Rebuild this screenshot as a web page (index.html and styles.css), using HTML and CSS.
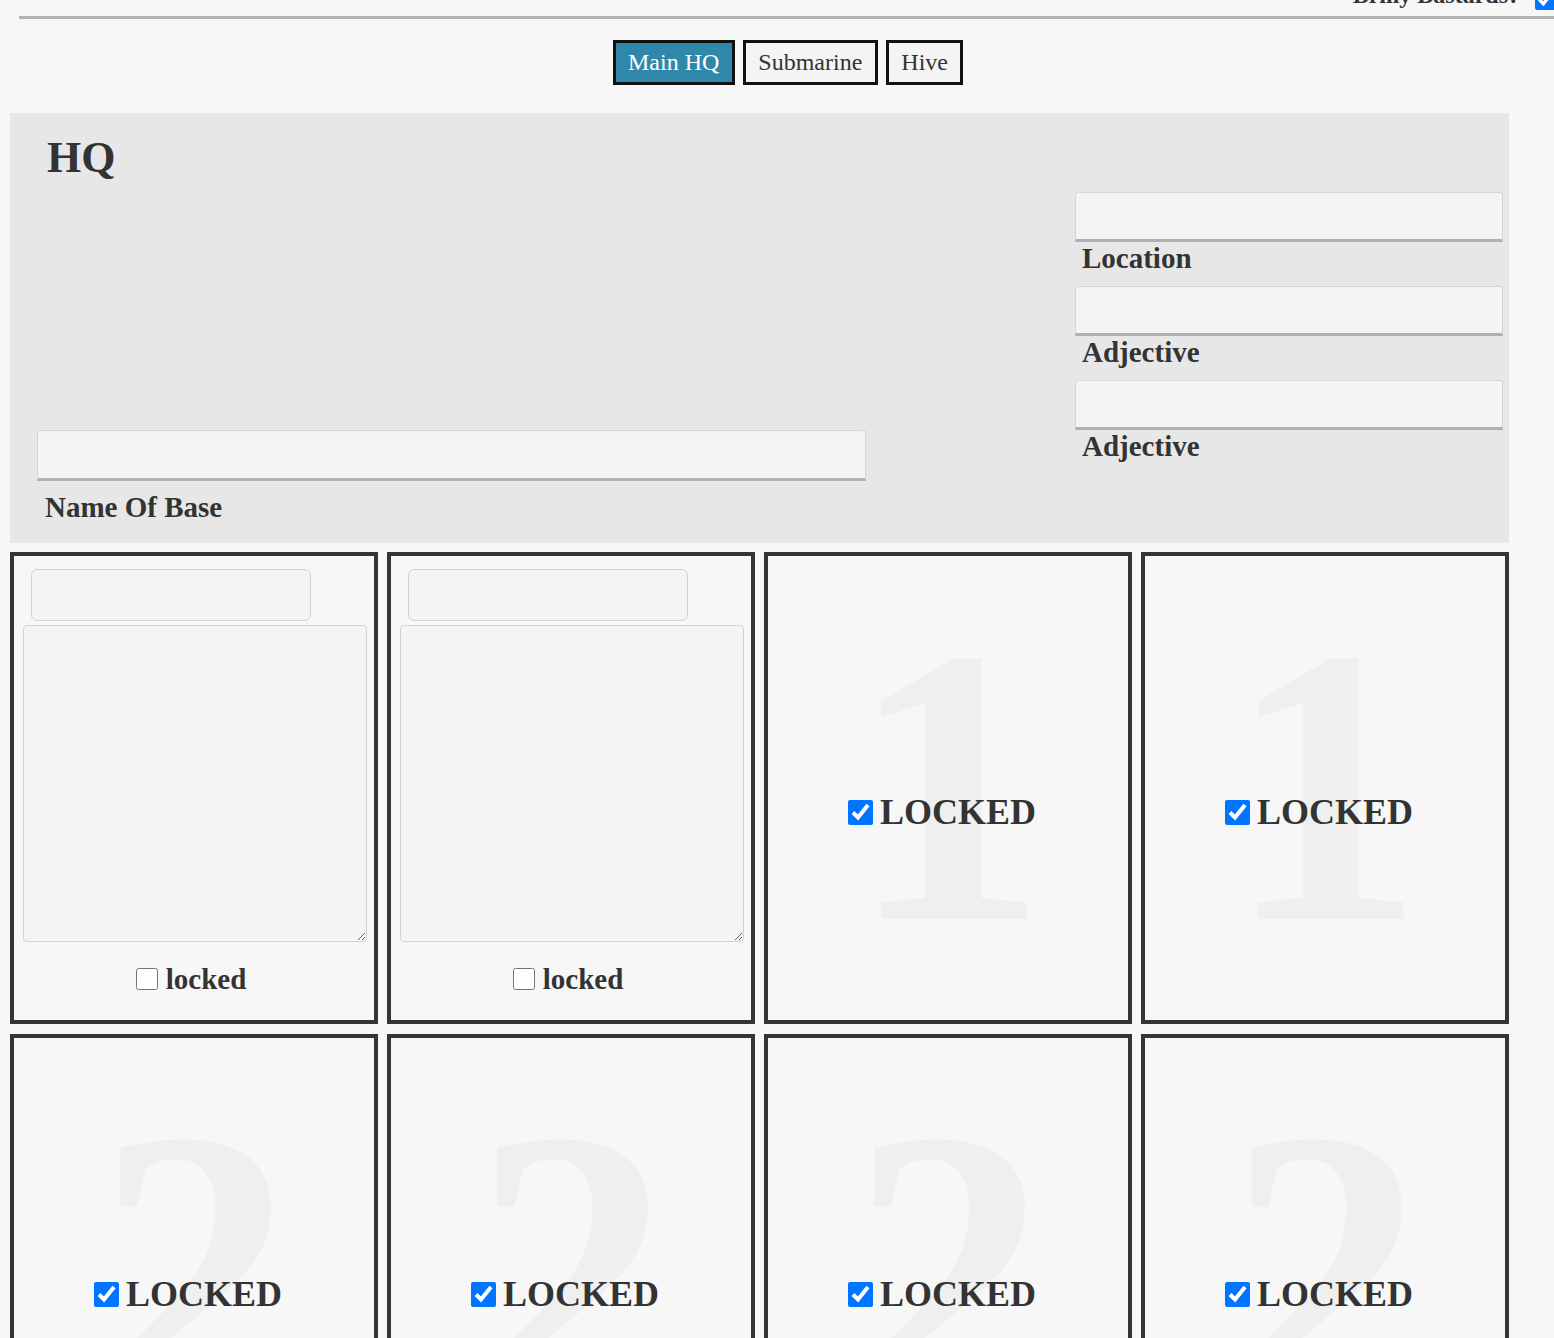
FILE: index.html
```html
<!DOCTYPE html>
<html lang="en">
<head>
<meta charset="utf-8">
<title>HQ</title>
<link rel="stylesheet" href="styles.css">
</head>
<body>
<div class="topbar">
  <div class="topbar-inner">
    <span class="top-label">Brilly Bastards?</span>
    <input type="checkbox" class="top-check" checked>
  </div>
</div>
<div class="rule"></div>

<nav class="tabs">
  <button class="tab active">Main HQ</button>
  <button class="tab">Submarine</button>
  <button class="tab">Hive</button>
</nav>

<section class="hq">
  <div class="hq-left">
    <h1 class="hq-title">HQ</h1>
    <div class="field name-field">
      <input type="text" class="line-input name-input">
      <label class="field-label name-label">Name Of Base</label>
    </div>
  </div>
  <div class="hq-right">
    <div class="field">
      <input type="text" class="line-input">
      <label class="field-label">Location</label>
    </div>
    <div class="field">
      <input type="text" class="line-input">
      <label class="field-label">Adjective</label>
    </div>
    <div class="field">
      <input type="text" class="line-input">
      <label class="field-label">Adjective</label>
    </div>
  </div>
</section>

<section class="grid">
  <div class="cell">
    <input type="text" class="cell-input">
    <textarea class="cell-text"></textarea>
    <label class="lock small"><input type="checkbox" class="chk-small"><span>locked</span></label>
  </div>
  <div class="cell">
    <input type="text" class="cell-input">
    <textarea class="cell-text"></textarea>
    <label class="lock small"><input type="checkbox" class="chk-small"><span>locked</span></label>
  </div>
  <div class="cell">
    <div class="digit">1</div>
    <label class="lock big"><input type="checkbox" class="chk-big" checked><span>LOCKED</span></label>
  </div>
  <div class="cell">
    <div class="digit">1</div>
    <label class="lock big"><input type="checkbox" class="chk-big" checked><span>LOCKED</span></label>
  </div>
  <div class="cell">
    <div class="digit">2</div>
    <label class="lock big"><input type="checkbox" class="chk-big" checked><span>LOCKED</span></label>
  </div>
  <div class="cell">
    <div class="digit">2</div>
    <label class="lock big"><input type="checkbox" class="chk-big" checked><span>LOCKED</span></label>
  </div>
  <div class="cell">
    <div class="digit">2</div>
    <label class="lock big"><input type="checkbox" class="chk-big" checked><span>LOCKED</span></label>
  </div>
  <div class="cell">
    <div class="digit">2</div>
    <label class="lock big"><input type="checkbox" class="chk-big" checked><span>LOCKED</span></label>
  </div>
</section>
</body>
</html>
```

FILE: styles.css
```css
html, body {
  overflow: hidden;
}
body {
  margin: 0;
  background: #f7f7f7;
  font-family: "Liberation Serif", "Times New Roman", serif;
  color: #333;
}

.topbar {
  display: flow-root;
  height: 16px;
}
.topbar-inner {
  margin-top: -17px;
  display: flex;
  justify-content: flex-end;
  align-items: flex-end;
  gap: 15px;
  margin-right: -2px;
}
.top-label {
  font-size: 24px;
  font-weight: bold;
  line-height: 24px;
}
.top-check {
  width: 21px;
  height: 21px;
  margin: 0 0 -3px 0;
}

.rule {
  margin-left: 19px;
  border-top: 3px solid #b3b3b3;
}

.tabs {
  display: flex;
  justify-content: center;
  gap: 8px;
  margin-top: 21px;
  padding-left: 22px;
}
.tab {
  font-family: "Liberation Serif", "Times New Roman", serif;
  font-size: 24px;
  line-height: 27px;
  padding: 6px 12.5px;
  border: 3px solid #111;
  background: #f4f4f4;
  color: #333;
  margin: 0;
}
.tab.active {
  background: #2f88a9;
  color: #fff;
}

.hq {
  margin: 28px 0 0 10px;
  width: 1499px;
  height: 430px;
  box-sizing: border-box;
  background: #e7e7e7;
  display: flex;
  padding: 20px 6px 19px 0;
}
.hq-left {
  flex: 1;
  display: flex;
  flex-direction: column;
  padding-left: 27px;
}
.hq-title {
  margin: 0;
  padding-left: 10px;
  font-size: 44px;
  font-weight: bold;
  line-height: 50px;
  color: #333;
}
.name-field {
  margin-top: auto;
}
.hq-right {
  width: 428px;
  padding-top: 59px;
}
.field {
  display: flex;
  flex-direction: column;
}
.line-input {
  box-sizing: border-box;
  height: 50px;
  margin: 0;
  background: #f4f4f4;
  border: 1px solid #d6d6d6;
  border-bottom: 3px solid #b0b0b0;
  border-radius: 3px 3px 0 0;
  width: 428px;
}
.name-input {
  width: 829px;
  height: 51px;
}
.field-label {
  font-size: 29px;
  font-weight: bold;
  line-height: 33px;
  padding-left: 7px;
  margin-bottom: 11px;
  color: #333;
}
.name-label {
  margin-top: 10px;
  margin-bottom: 0;
  padding-left: 8px;
}

.grid {
  margin: 9px 0 0 10px;
  width: 1499px;
  display: grid;
  grid-template-columns: repeat(4, 1fr);
  column-gap: 9px;
  row-gap: 10px;
}
.cell {
  position: relative;
  box-sizing: border-box;
  height: 472px;
  border: 4px solid #353535;
  background: #f7f7f7;
  overflow: hidden;
  display: flex;
  flex-direction: column;
}
.cell-input {
  box-sizing: border-box;
  width: 280px;
  height: 52px;
  margin: 13px 0 0 17px;
  background: #f4f4f4;
  border: 1px solid #d3d3d3;
  border-radius: 6px;
}
.cell-text {
  box-sizing: border-box;
  width: 344px;
  height: 317px;
  margin: 4px 0 0 9px;
  background: #f4f4f4;
  border: 1px solid #d3d3d3;
  border-radius: 4px;
}
.lock {
  position: relative;
  display: flex;
  justify-content: center;
  align-items: center;
  font-weight: bold;
  color: #333;
}
.lock.small {
  margin-top: 25px;
  gap: 8px;
  font-size: 29px;
  line-height: 24px;
  padding-right: 6px;
}
.chk-small {
  width: 22px;
  height: 22px;
  margin: 0;
}
.lock.big {
  margin-top: 236px;
  gap: 7px;
  font-size: 36px;
  line-height: 40px;
  padding-right: 12px;
}
.chk-big {
  width: 25px;
  height: 25px;
  margin: 0;
}
.digit {
  position: absolute;
  top: 32px;
  left: 0;
  right: 0;
  text-align: center;
  font-size: 395px;
  line-height: 1;
  font-weight: bold;
  color: #efefef;
}
```
